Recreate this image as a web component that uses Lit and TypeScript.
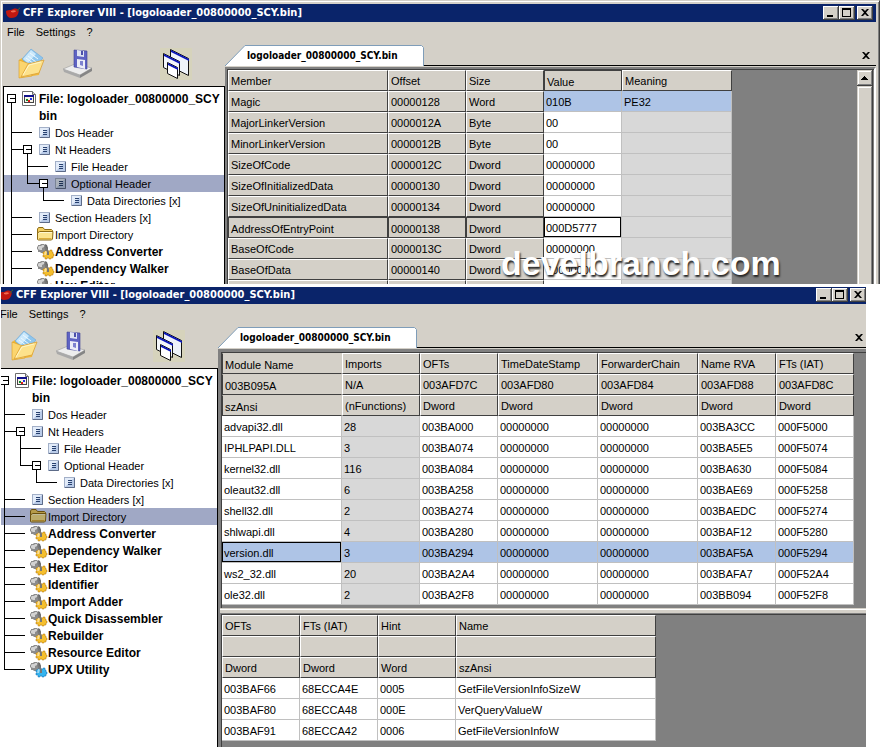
import { LitElement, html, svg, css, nothing } from "lit";
import { customElement, property } from "lit/decorators.js";
import { classMap } from "lit/directives/class-map.js";

const FILE_NAME = "logoloader_00800000_SCY.bin";

type IconName = "file" | "page" | "folder" | "tool" | "tool-blue";

interface TreeNode {
  id: string;
  label: string;
  level: number;
  icon: IconName;
  toggle?: boolean;
  bold?: boolean;
  /** Guide columns whose vertical line runs through this row. */
  through: number[];
  last?: boolean;
}

const TREE: TreeNode[] = [
  { id: "dos", label: "Dos Header", level: 1, icon: "page", through: [0] },
  { id: "nt", label: "Nt Headers", level: 1, icon: "page", toggle: true, through: [0] },
  { id: "fileh", label: "File Header", level: 2, icon: "page", through: [0, 1] },
  { id: "opt", label: "Optional Header", level: 2, icon: "page", toggle: true, last: true, through: [0] },
  { id: "data", label: "Data Directories [x]", level: 3, icon: "page", last: true, through: [0] },
  { id: "sect", label: "Section Headers [x]", level: 1, icon: "page", through: [0] },
  { id: "import", label: "Import Directory", level: 1, icon: "folder", through: [0] },
  ...[
    "Address Converter",
    "Dependency Walker",
    "Hex Editor",
    "Identifier",
    "Import Adder",
    "Quick Disassembler",
    "Rebuilder",
    "Resource Editor",
  ].map((label): TreeNode => ({ id: label, label, level: 1, icon: "tool", bold: true, through: [0] })),
  { id: "upx", label: "UPX Utility", level: 1, icon: "tool-blue", bold: true, last: true, through: [] },
];

const gear = (color: string, dark: string) => svg`
  <g>
    <path d="M1 2h2l1-1h3l1 1h2v2l1 1v2l-1 2H8L7 10H4L3 9H1V7L0 6V4l1-1z" fill="#8c8c8c"/>
    <path d="M2 3h2l1-1h2v2L5 5v2H3L1 6V4z" fill="#d2d2d2"/>
    <path d="M8 1l2 1 1 3v4l-2-1z" fill="#6a6a6a"/>
    <path d="M7 9l1-1h1V7h2v1h2V7h2v2h1v2h1v2h-1v2h-2v1h-2v-1h-2v1H8v-2H6v-2h1v-1H6V9z" fill=${color} stroke=${dark} stroke-width="0.5"/>
    <path d="M8 8h2l-1 4H7z" fill="#fff" opacity="0.5"/>
    <path d="M7 4l3 1 2 4v3h-2V9L8 6z" fill="#777"/>
  </g>`;

const ICONS = {
  file: svg`
    <path d="M1.5 1.500h10l3 3v11h-13z" fill="#fff" stroke="#6d6d6d"/>
    <path d="M11.500 1.500v3h3" fill="#d8d8d8" stroke="#6d6d6d"/>
    <rect x="3.500" y="5.500" width="9" height="7" fill="#f7f3e8" stroke="#444"/>
    <rect x="3" y="5" width="10" height="2" fill="#12128c"/>
    <rect x="5" y="9" width="2" height="2" fill="#0a8a2a"/>
    <rect x="7" y="10" width="2" height="2" fill="#e01818"/>
    <rect x="9" y="8" width="2" height="2" fill="#2030e0"/>`,
  page: svg`
    <rect x="2.500" y="3.500" width="10" height="10" fill="#b9cbe8" stroke="#a3b0c8"/>
    <path d="M3 13V4h9z" fill="#e3ecf9"/>
    <path d="M12.500 4v9.500H3" fill="none" stroke="#5d6b88"/>
    <path d="M6 6.500h4M6 8.500h4M6 10.500h4" stroke="#27406e"/>`,
  folder: svg`
    <path d="M.5 13V3l1-1.500h4.500l1.500 2h7l1 1V6" fill="#f3cf62" stroke="#8d6b14"/>
    <path d="M.5 13.500V7l2-1.500H16l-.5 7.500-1 1H1.500z" fill="#fbe48e" stroke="#8d6b14"/>
    <path d="M2 7.500l1-1h12" fill="none" stroke="#fff8d0"/>
    <path d="M2 12.500h12.500" stroke="#dcae3c"/>`,
  tool: gear("#f5bf2e", "#b77a12"),
  "tool-blue": gear("#35b4ee", "#1573b5"),
};

const PEPPER = svg`
  <path d="M0 4c1-1 3-1 5-1 2-1 4-2 6-1 2 0 2 3 1 5-1 3-4 4-7 4C2 11 0 8 0 4z" fill="#c01810"/>
  <path d="M5 4c2-1 4-1 5 0 0 1-3 2-5 1z" fill="#f26a50"/>
  <path d="M11 4c2 0 1-3 3-3" fill="none" stroke="#3f6b30" stroke-width="1"/>`;

const OPEN_ICON = svg`
  <path d="M3 12l3-2 6 2 14 2-3 13L3 30z" fill="#f1b83a"/>
  <path d="M15 1l12 9-10 11L6 11z" fill="#8fc6ee" stroke="#6ca7d8" stroke-width="0.600"/>
  <path d="M15 2l5 4-8 9-5-4z" fill="#cbe8fb"/>
  <path d="M14 5l8 6M12 8l8 6M10 10l8 6" stroke="#eef9ff"/>
  <path d="M3 12l11 4 2 12-13 2z" fill="#fbd56e" stroke="#d99a24" stroke-width="0.600"/>
  <path d="M5 29l7-13 16-4-5 13z" fill="#fde28c" stroke="#dba033" stroke-width="0.800"/>
  <path d="M7 27l6-10 12-3" fill="none" stroke="#fff6c8"/>`;

const SAVE_ICON = svg`
  <path d="M1 21l12-5 17 4-12 7z" fill="#ededed" stroke="#9b9b9b" stroke-width="0.600"/>
  <path d="M1 21l17 6v3L2 24z" fill="#a9a9a9"/>
  <path d="M18 27l12-7v3l-12 7z" fill="#858585"/>
  <path d="M12 2l13 1v18l-13-2z" fill="#5f63c3" stroke="#3c3f94" stroke-width="0.600"/>
  <path d="M15 2l7 1v6l-7-1z" fill="#dfe3f2"/>
  <path d="M19 3h2v4h-2z" fill="#4c50aa"/>
  <path d="M15 11l8 1v9l-8-2z" fill="#eceef8"/>
  <path d="M18 13h3v5l-3-1z" fill="#7d82cf"/>`;

const CASCADE_ICON = svg`
  <rect width="32" height="32" fill="#d6d3bc"/>
  <g stroke="#101010" stroke-width="1">
    <path d="M10.500 1.500l18 9v17l-18-9z" fill="#eef3fa"/>
    <path d="M3.500 5.500l16 8v14l-16-8z" fill="#f4f7fb"/>
    <path d="M7.500 14.500l10 5v11l-10-5z" fill="#fff"/>
  </g>
  <path d="M11 2l18 9v2L11 4z" fill="#0a16b8"/>
  <path d="M4 6l16 8v2L4 8z" fill="#0a16b8"/>
  <path d="M8 15l10 5v2L8 17z" fill="#0a16b8"/>`;

const CROSS = svg`<path d="M1 1h2l2 2 2-2h2L6 4.500 9 8H7L5 6 3 8H1l3-3.500z" fill="#000"/>`;

interface Cell {
  text: string;
  kind: "head" | "plain" | "dim";
  pressed?: boolean;
  sunk?: boolean;
  hot?: boolean;
  focus?: boolean;
}

@customElement("hex-grid")
export class HexGrid extends LitElement {
  @property({ attribute: false }) widths: number[] = [];
  @property({ attribute: false }) rows: Cell[][] = [];
  @property() label = "";

  static styles = css`
    :host { display: block; }
    .grid { table-layout: fixed; border-collapse: separate; border-spacing: 0; }
    .cell {
      box-sizing: border-box; height: 21px; padding: 2px 2px 0; text-align: left; vertical-align: top;
      font: 11px/17px "Liberation Sans", Arial, sans-serif; white-space: nowrap;
      overflow: hidden; color: #000;
    }
    .head {
      background: #d4d0c8; border: 1px solid #fff;
      border-right-color: #404040; border-bottom-color: #404040;
    }
    .pressed { border-top-color: #404040; border-left-color: #404040; padding-top: 3px; line-height: 16px; }
    .sunk { border-top-color: #d4d0c8; border-right-color: #d4d0c8; }
    .plain, .dim { border: 0 solid #c0c0c0; border-width: 0 1px 1px 0; padding-top: 3px; background: #fff; }
    .dim { background: #d8d8d8; }
    .hot { background: #aec4e6; }
    .focus { box-shadow: inset 0 0 0 1px #000; }
  `;

  render() {
    const total = this.widths.reduce((a, b) => a + b, 0);
    return html`<table class="grid" aria-label=${this.label} style="width:${total}px">
      <colgroup>${this.widths.map((w) => html`<col style="width:${w}px" />`)}</colgroup>
      <tbody>
        ${this.rows.map(
          (row) => html`<tr>
            ${row.map((c) => {
              const cls = classMap({
                cell: true,
                [c.kind]: true,
                pressed: !!c.pressed,
                sunk: !!c.sunk,
                hot: !!c.hot,
                focus: !!c.focus,
              });
              return html`<td class=${cls}>${c.text}</td>`;
            })}
          </tr>`
        )}
      </tbody>
    </table>`;
  }
}

@customElement("explorer-window")
export class ExplorerWindow extends LitElement {
  @property() selected = "";

  static styles = css`
    :host {
      display: flex; flex-direction: column; box-sizing: border-box; min-height: 0;
      background: #d4d0c8; border: 1px solid #d4d0c8; border-right-color: #404040; border-bottom: 0;
      box-shadow: inset 1px 1px #fff, inset -1px 0 #808080;
      padding: 3px 3px 0 2px;
      font: 11px/17px "Liberation Sans", Arial, sans-serif; color: #000;
    }
    button { font: inherit; color: inherit; border: 0; padding: 0; margin: 0; background: none; display: block; }
    .title {
      display: flex; align-items: center; flex: none; height: 18px; padding: 0 3px; background: #0a246a;
      color: #fff; font: bold 11px/18px "DejaVu Sans Condensed", "DejaVu Sans", sans-serif; white-space: nowrap;
    }
    .title-text { margin: 0; font: inherit; flex: 1; min-width: 0; overflow: hidden; }
    .pepper { width: 15px; height: 12px; margin-right: 2px; flex: none; }
    .caption {
      flex: none; width: 16px; height: 14px; background: #d4d0c8;
      box-shadow: inset -1px -1px #404040, inset 1px 1px #fff, inset -2px -2px #808080;
    }
    .caption.close { margin-left: 2px; }
    .glyph { display: block; width: 16px; height: 14px; }
    .menu { display: flex; flex: none; gap: 11px; height: 20px; padding: 0 4px; line-height: 20px; }
    .body { display: flex; flex: 1; min-height: 0; }
    .side { display: flex; flex-direction: column; flex: none; width: 222px; min-height: 0; }
    .toolbar { display: flex; flex: none; height: 38px; padding: 6px 0 0 13px; gap: 14px; }
    .tool, .tool-art { width: 32px; height: 32px; display: block; }
    .tool.windows { margin-left: 52px; }
    .tree {
      flex: 1; min-height: 0; overflow: hidden; margin: 0; padding: 3px 0 0; list-style: none;
      background: #fff; border: 1px solid #000; border-bottom: 0; font-size: 11px;
    }
    .node { display: flex; height: 17px; white-space: nowrap; }
    .node.root { height: 34px; }
    .node.bold { font-weight: bold; font-size: 12px; }
    .node.selected { background: #a0a8c5; }
    .node.selected .mark { filter: brightness(0.75); }
    .name { padding-top: 1px; }
    .guides, .mark { flex: none; display: block; }
    .main { display: flex; flex-direction: column; flex: 1; min-width: 0; min-height: 0; }
    .tabs {
      display: flex; flex: none; height: 24px; box-sizing: border-box; align-items: stretch;
      justify-content: space-between; margin-bottom: 1px; padding-top: 3px;
    }
    .tab { position: relative; width: 199px; flex: none; text-align: left;
      font: bold 10px/21px "DejaVu Sans Condensed", "DejaVu Sans", sans-serif; }
    .tab-shape { position: absolute; left: 0; top: 0; width: 199px; height: 21px; }
    .tab-text { position: relative; padding-left: 22px; }
    .rest { flex: 1; border-bottom: 1px solid #000; display: flex; justify-content: flex-end; align-items: center; padding-right: 5px; }
    .x { width: 10px; height: 9px; display: block; }
    .view {
      display: flex; flex-direction: column; flex: 1; min-height: 0; overflow: hidden; background: #808080;
      border: 2px solid #808080; border-right-color: #fff; border-bottom: 0;
    }
  `;

  private guides(n: TreeNode) {
    const w = 17 + 16 * n.level;
    const stem = 7.5 + 16 * (n.level - 1);
    const end = stem + (n.toggle ? 12 : 20);
    const bx = 3.5 + 16 * n.level;
    return html`<svg class="guides" width=${w} height="17" fill="none" stroke="#000" shape-rendering="crispEdges" aria-hidden="true">
      ${n.through.map((c) => svg`<path d="M${7.5 + 16 * c} 0v17" />`)}
      <path d="M${stem} 0V8.5H${end}" />
      ${n.toggle
        ? svg`<path d="M${bx + 4} 13v4" /><rect x=${bx} y="4.500" width="8" height="8" fill="#fff" /><path d="M${bx + 2} 8.500h5" />`
        : nothing}
    </svg>`;
  }

  private mark(name: IconName) {
    return html`<svg class="mark" width="18" height="17" aria-hidden="true">${ICONS[name]}</svg>`;
  }

  render() {
    return html`
      <header class="title">
        <svg class="pepper" viewBox="0 0 15 12" aria-hidden="true">${PEPPER}</svg>
        <h1 class="title-text">CFF Explorer VIII - [${FILE_NAME}]</h1>
        <button class="caption" aria-label="Minimize">
          <svg class="glyph"><rect x="4" y="9" width="6" height="2" /></svg>
        </button>
        <button class="caption" aria-label="Maximize">
          <svg class="glyph"><path d="M3 2h9v9H3zM4 4v6h7V4z" fill-rule="evenodd" /></svg>
        </button>
        <button class="caption close" aria-label="Close">
          <svg class="glyph" viewBox="-3 -2 16 14">${CROSS}</svg>
        </button>
      </header>
      <nav class="menu" aria-label="Menu">
        <button>File</button><button>Settings</button><button>?</button>
      </nav>
      <div class="body">
        <div class="side">
          <div class="toolbar">
            <button class="tool" aria-label="Open"><svg class="tool-art" viewBox="0 0 32 32">${OPEN_ICON}</svg></button>
            <button class="tool" aria-label="Save"><svg class="tool-art" viewBox="0 0 32 32">${SAVE_ICON}</svg></button>
            <button class="tool windows" aria-label="Windows"><svg class="tool-art" viewBox="0 0 32 32">${CASCADE_ICON}</svg></button>
          </div>
          <ul class="tree">
            <li class="node bold root">
              <svg class="guides" width="17" height="34" fill="none" stroke="#000" shape-rendering="crispEdges" aria-hidden="true">
                <rect x="3.500" y="4.500" width="8" height="8" /><path d="M5.500 8.500h5M7.500 13v21" />
              </svg>
              ${this.mark("file")}
              <span class="name">File: logoloader_00800000_SCY<br />bin</span>
            </li>
            ${TREE.map(
              (n) => html`<li class=${classMap({ node: true, bold: !!n.bold, selected: n.id === this.selected })}>
                ${this.guides(n)}${this.mark(n.icon)}<span class="name">${n.label}</span>
              </li>`
            )}
          </ul>
        </div>
        <div class="main">
          <div class="tabs">
            <button class="tab">
              <svg class="tab-shape" viewBox="0 0 199 21" aria-hidden="true">
                <path d="M0 21L20 .5H196.500L198.500 2.500V21z" fill="#fff" />
                <path d="M0 21L20 .5H196.500L198.500 2.500V21" fill="none" stroke="#7f9db9" />
              </svg>
              <span class="tab-text">${FILE_NAME}</span>
            </button>
            <div class="rest">
              <button aria-label="Close tab"><svg class="x" viewBox="0 0 10 9">${CROSS}</svg></button>
            </div>
          </div>
          <div class="view"><slot></slot></div>
        </div>
      </div>
    `;
  }
}

const head = (text: string, pressed = false, sunk = false): Cell => ({ text, kind: "head", pressed, sunk });

const FIELDS: [string, string, string, string, string][] = [
  ["Magic", "00000128", "Word", "010B", "PE32"],
  ["MajorLinkerVersion", "0000012A", "Byte", "00", ""],
  ["MinorLinkerVersion", "0000012B", "Byte", "00", ""],
  ["SizeOfCode", "0000012C", "Dword", "00000000", ""],
  ["SizeOfInitializedData", "00000130", "Dword", "00000000", ""],
  ["SizeOfUninitializedData", "00000134", "Dword", "00000000", ""],
  ["AddressOfEntryPoint", "00000138", "Dword", "000D5777", ""],
  ["BaseOfCode", "0000013C", "Dword", "00000000", ""],
  ["BaseOfData", "00000140", "Dword", "00000000", ""],
  ["", "", "", "", ""],
];

const HEADER_ROWS: Cell[][] = [
  [head("Member"), head("Offset"), head("Size"), head("Value", true), head("Meaning")],
  ...FIELDS.map(([member, offset, size, value, meaning], i): Cell[] => {
    const current = member === "AddressOfEntryPoint";
    return [
      head(member, current),
      head(offset, current),
      head(size, current),
      { text: value, kind: "plain", hot: i === 0, focus: current },
      { text: meaning, kind: "dim", hot: i === 0 },
    ];
  }),
];

const MODULES = [
  ["advapi32.dll", "28", "003BA000", "003BA3CC", "000F5000"],
  ["IPHLPAPI.DLL", "3", "003BA074", "003BA5E5", "000F5074"],
  ["kernel32.dll", "116", "003BA084", "003BA630", "000F5084"],
  ["oleaut32.dll", "6", "003BA258", "003BAE69", "000F5258"],
  ["shell32.dll", "2", "003BA274", "003BAEDC", "000F5274"],
  ["shlwapi.dll", "4", "003BA280", "003BAF12", "000F5280"],
  ["version.dll", "3", "003BA294", "003BAF5A", "000F5294"],
  ["ws2_32.dll", "20", "003BA2A4", "003BAFA7", "000F52A4"],
  ["ole32.dll", "2", "003BA2F8", "003BB094", "000F52F8"],
];

const MODULE_ROWS: Cell[][] = [
  ["Module Name", "Imports", "OFTs", "TimeDateStamp", "ForwarderChain", "Name RVA", "FTs (IAT)"],
  ["003B095A", "N/A", "003AFD7C", "003AFD80", "003AFD84", "003AFD88", "003AFD8C"],
  ["szAnsi", "(nFunctions)", "Dword", "Dword", "Dword", "Dword", "Dword"],
]
  .map((r) => r.map((t, i) => head(t, i === 0, i === 0)))
  .concat(
    MODULES.map(([name, count, oft, rva, iat]) => {
      const hot = name === "version.dll";
      return [name, count, oft, "00000000", "00000000", rva, iat].map(
        (text, i): Cell => ({ text, kind: i === 1 ? "dim" : "plain", hot, focus: hot && i === 0 })
      );
    })
  );

const FUNCTION_ROWS: Cell[][] = [
  ["OFTs", "FTs (IAT)", "Hint", "Name"],
  ["", "", "", ""],
  ["Dword", "Dword", "Word", "szAnsi"],
]
  .map((r) => r.map((t) => head(t)))
  .concat(
    [
      ["003BAF66", "68ECCA4E", "0005", "GetFileVersionInfoSizeW"],
      ["003BAF80", "68ECCA48", "000E", "VerQueryValueW"],
      ["003BAF91", "68ECCA42", "0006", "GetFileVersionInfoW"],
    ].map((r) => r.map((text): Cell => ({ text, kind: "plain" })))
  );

@customElement("app-root")
export class AppRoot extends LitElement {
  static styles = css`
    :host { display: flex; flex-direction: column; gap: 3px; height: 100vh; background: #fff; overflow: hidden; }
    .shot { display: flex; min-height: 0; overflow: hidden; }
    .first { position: relative; flex: 284 1 0; margin-right: 3px; }
    .second { flex: 460 1 0; margin: 0 17px 0 1px; }
    .window { flex: 1; min-width: 0; }
    .second .window { margin: -5px -7px 0 -8px; }
    .pane { box-sizing: border-box; background: #808080; overflow: hidden; border: 0 solid #404040; border-width: 1px 0 0 1px; }
    .scrolling { display: flex; justify-content: space-between; flex: 1; min-height: 0; }
    .bar { display: flex; flex-direction: column; width: 16px; margin-right: 1px; background: #d4d0c8; }
    .arrow, .thumb { border: 0; padding: 0; background: #d4d0c8;
      box-shadow: inset -1px -1px #404040, inset 1px 1px #d4d0c8, inset -2px -2px #808080, inset 2px 2px #fff; }
    .arrow { display: block; width: 16px; height: 16px; flex: none; }
    .arrow-art { display: block; width: 16px; height: 16px; }
    .thumb { flex: 1; margin-bottom: -2px; }
    .split { display: flex; flex-direction: column; flex: 1; min-height: 0; padding: 1px 0 0 1px; }
    .upper { flex: none; padding-bottom: 3px; }
    .splitter { flex: none; height: 5px; margin: 0 0 1px -1px; background: linear-gradient(#d4d0c8 1px, #fff 1px 2px, #d4d0c8 2px); }
    .lower { flex: 1; min-height: 0; }
    .watermark {
      position: absolute; left: 501px; bottom: 0; margin: 0; white-space: nowrap; color: #fff;
      font: bold 34px/42px "Liberation Sans", Arial, sans-serif; text-shadow: 1px 2px 2px #222;
    }
  `;

  render() {
    return html`
      <section class="shot first">
        <explorer-window class="window" selected="opt">
          <div class="pane scrolling">
            <hex-grid label="Optional Header" .widths=${[160, 78, 78, 78, 110]} .rows=${HEADER_ROWS}></hex-grid>
            <div class="bar">
              <button class="arrow" aria-label="Scroll up">
                <svg class="arrow-art"><path d="M7 6h1v1h1v1h1v1h1v1H4V9h1V8h1V7h1z" /></svg>
              </button>
              <div class="thumb"></div>
            </div>
          </div>
        </explorer-window>
        <p class="watermark">develbranch.com</p>
      </section>
      <section class="shot second">
        <explorer-window class="window" selected="import">
          <div class="split">
            <div class="pane upper">
              <hex-grid label="Import Directory" .widths=${[120, 78, 78, 100, 100, 78, 78]} .rows=${MODULE_ROWS}></hex-grid>
            </div>
            <div class="splitter"></div>
            <div class="pane lower">
              <hex-grid label="Imported functions" .widths=${[78, 78, 78, 200]} .rows=${FUNCTION_ROWS}></hex-grid>
            </div>
          </div>
        </explorer-window>
      </section>
    `;
  }
}
